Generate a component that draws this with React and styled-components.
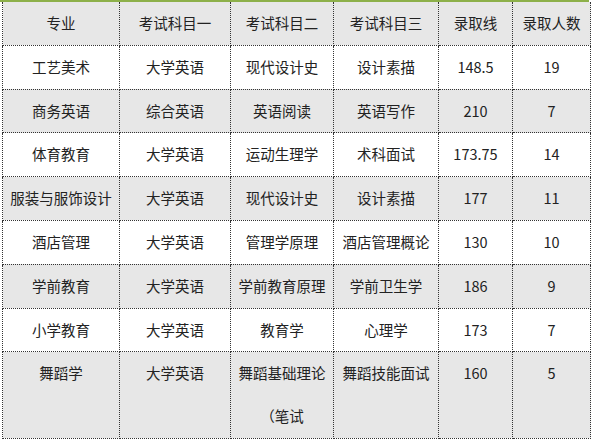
import React from 'react';
import styled, { createGlobalStyle } from 'styled-components';

const GlobalStyle = createGlobalStyle`
  body {
    margin: 0;
    background: #fff;
    font-family: "Noto Sans CJK SC", "Noto Sans", sans-serif;
  }
`

const Wrap = styled.div`
  width: 589px;
  border-top: 2px solid #8db04a;
`

const Table = styled.table`
  margin-left: 2px;
  width: 588px;
  border-collapse: collapse;
  table-layout: fixed;
  color: #222;
  font-size: 14.5px;
`

const Row = styled.tr`
  background: ${p => (p.$shade ? '#e7e7e7' : '#fff')};
`

const Cell = styled.td`
  border: 1px dotted #333;
  border-top: ${p => (p.$first ? 'none' : '1px dotted #333')};
  padding: 0;
  line-height: 42.8px;
  text-align: center;
  vertical-align: top;
  white-space: normal;
  word-break: break-all;
`

const cols = [117, 111, 103, 105, 74, 78]

const head = ['专业', '考试科目一', '考试科目二', '考试科目三', '录取线', '录取人数']

const rows = [
  ['工艺美术', '大学英语', '现代设计史', '设计素描', '148.5', '19'],
  ['商务英语', '综合英语', '英语阅读', '英语写作', '210', '7'],
  ['体育教育', '大学英语', '运动生理学', '术科面试', '173.75', '14'],
  ['服装与服饰设计', '大学英语', '现代设计史', '设计素描', '177', '11'],
  ['酒店管理', '大学英语', '管理学原理', '酒店管理概论', '130', '10'],
  ['学前教育', '大学英语', '学前教育原理', '学前卫生学', '186', '9'],
  ['小学教育', '大学英语', '教育学', '心理学', '173', '7'],
  ['舞蹈学', '大学英语', '舞蹈基础理论（笔试', '舞蹈技能面试', '160', '5'],
]

export default function App() {
  return (
    <Wrap>
      <GlobalStyle />
      <Table>
        <colgroup>
          {cols.map((w, i) => <col key={i} style={{ width: w }} />)}
        </colgroup>
        <tbody>
          <Row $shade>
            {head.map(h => <Cell key={h} $first>{h}</Cell>)}
          </Row>
          {rows.map((r, i) => (
            <Row key={r[0]} $shade={i % 2 === 1}>
              {r.map((c, j) => <Cell key={j}>{c}</Cell>)}
            </Row>
          ))}
        </tbody>
      </Table>
    </Wrap>
  )
}
